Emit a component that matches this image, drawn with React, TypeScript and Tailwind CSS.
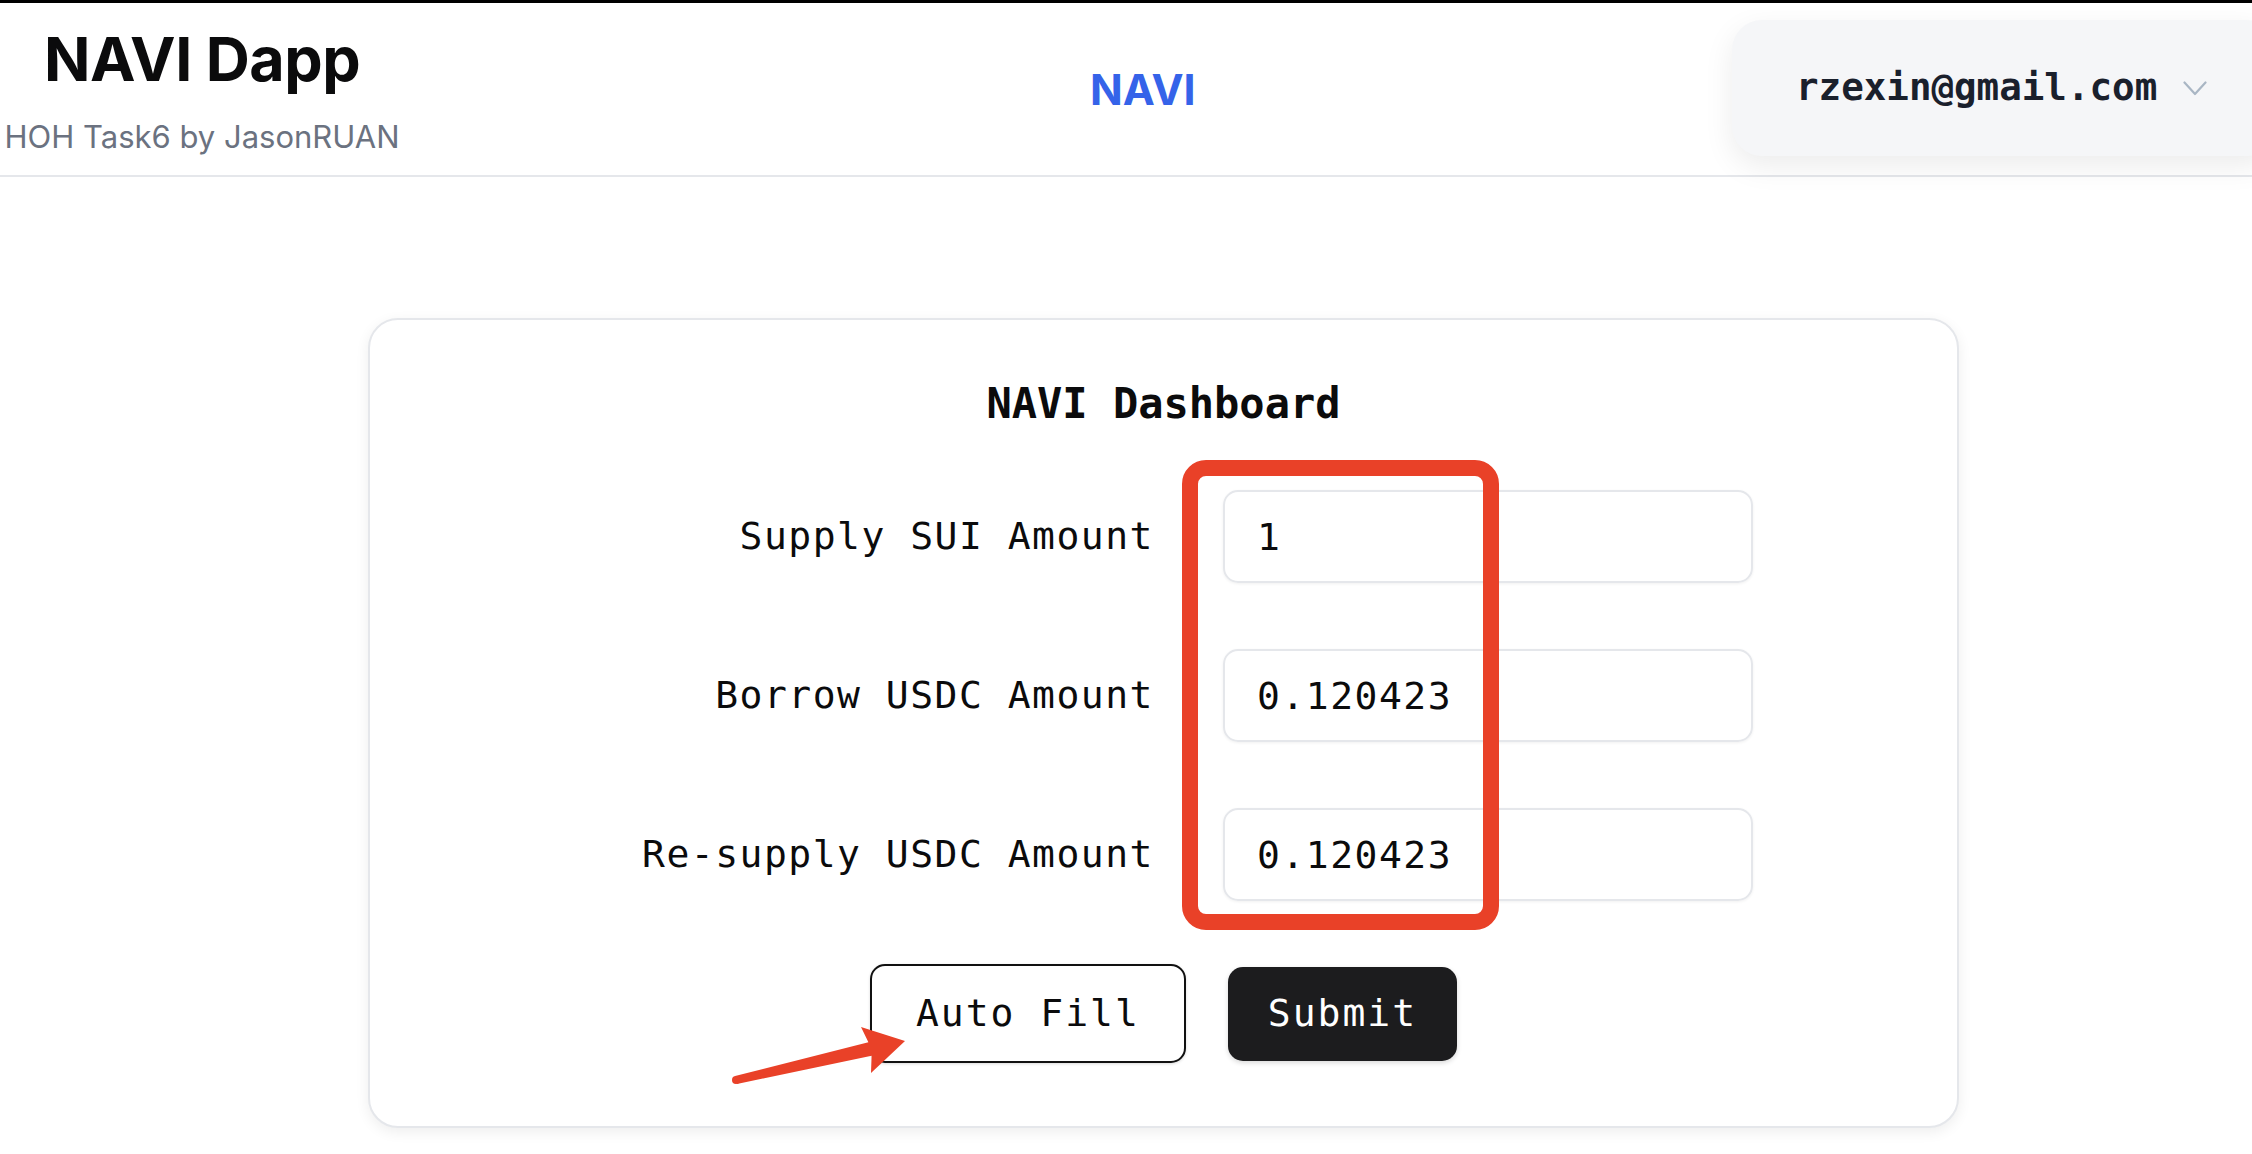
import React from 'react';

const mono = { fontFamily: '"DejaVu Sans Mono", "Liberation Mono", monospace' };

export default function App() {
  const rows = [
    { label: 'Supply SUI Amount', value: '1' },
    { label: 'Borrow USDC Amount', value: '0.120423' },
    { label: 'Re-supply USDC Amount', value: '0.120423' },
  ];

  return (
    <div className="relative w-[2252px] h-[1154px] overflow-hidden bg-white">
      <div className="h-[3px] bg-black" />

      {/* Header */}
      <header className="flex items-center h-[174px] border-b-2 border-[#e5e7eb] w-[2400px] font-['Inter',sans-serif]">
        <div className="w-[404px] flex flex-col items-center">
          <h1 className="text-[61px] leading-[64px] font-bold text-[#0b0b0c] tracking-[-0.5px]">NAVI Dapp</h1>
          <p className="mt-[31px] text-[31px] leading-[30px] text-[#6b7280]">HOH Task6 by JasonRUAN</p>
        </div>
        <div className="ml-[686px] w-[642px] shrink-0">
          <span className="text-[43px] font-bold text-[#3563e9]">NAVI</span>
        </div>
        <div className="shrink-0 w-[544px] h-[136px] -mt-[3px] rounded-[30px] bg-[#f5f6f8] shadow-[0_10px_30px_rgba(0,0,0,0.08)] flex items-center pl-[64px]">
          <span style={mono} className="text-[37.5px] font-bold text-[#1a202c]">rzexin@gmail.com</span>
          <svg className="ml-[26px] mt-[2px]" width="24" height="15" viewBox="0 0 24 15" fill="none">
            <polyline points="1.5,1.5 12,13 22.5,1.5" stroke="#a9b6c4" strokeWidth="2.2" strokeLinecap="round" strokeLinejoin="round" />
          </svg>
        </div>
      </header>

      {/* Dashboard card */}
      <main className="ml-[368px] mt-[141px] w-[1591px] h-[810px] rounded-[30px] border-2 border-[#e5e7eb] bg-white shadow-[0_4px_14px_rgba(0,0,0,0.07)] pt-[63px]" style={mono}>
        <h2 className="text-center text-[42px] leading-[42px] font-bold text-[#0b0b0c]">NAVI Dashboard</h2>

        <div className="mt-[65px] flex flex-col gap-[66px]">
          {rows.map((row) => (
            <div key={row.label} className="flex items-center justify-center gap-[69px]">
              <label className="w-[580px] text-right text-[38px] tracking-[1.5px] text-[#0b0b0c]">{row.label}</label>
              <input
                readOnly
                value={row.value}
                style={mono}
                className="w-[530px] h-[93px] rounded-[15px] border-2 border-[#e5e7eb] shadow-[0_1px_3px_rgba(0,0,0,0.06)] pl-[32px] text-[38px] tracking-[1.5px] text-[#0b0b0c] outline-none"
              />
            </div>
          ))}
        </div>

        <div className="mt-[63px] flex items-center justify-center gap-[42px]">
          <button className="h-[99px] px-[44px] rounded-[15px] border-2 border-[#111] bg-white text-[38px] tracking-[2px] text-[#0b0b0c] shadow-[0_1px_3px_rgba(0,0,0,0.15)]">
            Auto Fill
          </button>
          <button className="h-[94px] px-[40px] rounded-[15px] bg-[#1c1c1e] text-[38px] tracking-[2px] text-white shadow-[0_2px_5px_rgba(0,0,0,0.15)]">
            Submit
          </button>
        </div>
      </main>

      {/* Red annotations */}
      <div className="absolute left-[1182px] top-[460px] w-[317px] h-[470px] border-[16px] border-[#e94128] rounded-[24px] pointer-events-none" />
      <svg className="absolute left-0 top-0 pointer-events-none" width="2252" height="1154" viewBox="0 0 2252 1154">
        <polygon
          fill="#e94128"
          points="735.1,1076.1 868.4,1042.2 861,1027 905,1041 871,1073 871.6,1055.8 736.9,1083.9"
        />
        <circle cx="736" cy="1080" r="4" fill="#e94128" />
      </svg>
    </div>
  );
}
